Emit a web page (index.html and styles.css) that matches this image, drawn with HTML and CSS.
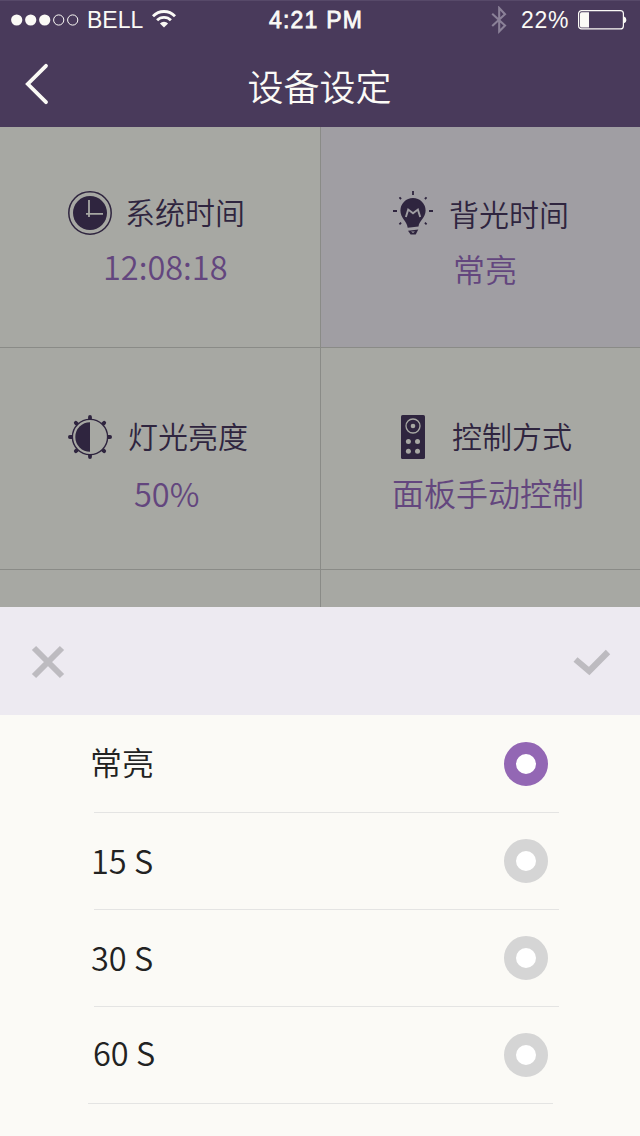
FILE: index.html
```html
<!DOCTYPE html>
<html lang="zh-CN">
<head>
<meta charset="utf-8">
<title>设备设定</title>
<link rel="stylesheet" href="styles.css">
</head>
<body>
<div class="screen">
  <header class="header">
    <div class="status">
      <svg class="signal" width="68" height="12" viewBox="0 0 68 12"><g fill="#fbfaf6"><circle cx="5.7" cy="6" r="5.6"/><circle cx="19.7" cy="6" r="5.6"/><circle cx="33.7" cy="6" r="5.6"/></g><g fill="none" stroke="#fbfaf6"><circle cx="47.7" cy="6" r="5.1"/><circle cx="61.7" cy="6" r="5.1"/></g></svg>
      <span class="carrier">BELL</span>
      <svg class="wifi" width="26" height="20" viewBox="0 0 26 20"><g fill="none" stroke="#fbfaf6" stroke-width="2.8"><path d="M2 7.2a15.2 15.2 0 0 1 22 0"/><path d="M6.1 11.3a9.6 9.6 0 0 1 13.8 0"/></g><path d="M13 18.6L8.9 14.5a5.8 5.8 0 0 1 8.2 0z" fill="#fbfaf6"/></svg>
      <span class="clock">4:21 PM</span>
      <svg class="bluetooth" width="16" height="28" viewBox="0 0 16 28"><path d="M1.2 7.8L14 19.6 8.2 25.4V2L14 8.2 1.2 20" fill="none" stroke="#8b8198" stroke-width="2.1"/></svg>
      <span class="percent">22%</span>
      <svg class="battery" width="50" height="20" viewBox="0 0 50 20"><rect x=".6" y=".6" width="44.8" height="18.3" rx="3" fill="none" stroke="#fbfaf6" stroke-width="1.2"/><path d="M3.5 2.2H11v15.3H3.5A1.5 1.5 0 0 1 2 16V3.7a1.5 1.5 0 0 1 1.5-1.5z" fill="#fbfaf6"/><path d="M46 6.5a3.6 3.6 0 0 1 0 6.8z" fill="#fbfaf6"/></svg>
    </div>
    <div class="nav">
      <svg class="back" width="26" height="44" viewBox="0 0 26 44"><path d="M22 3.8L3.8 22 22 40.2" fill="none" stroke="#fbfaf6" stroke-width="3.8" stroke-linecap="round"/></svg>
      <h1 class="title">设备设定</h1>
    </div>
  </header>

  <main class="settings">
    <section class="cell time">
      <div class="head">
        <svg width="44" height="44" viewBox="0 0 44 44"><circle cx="22" cy="22" r="21.2" fill="none" stroke="#2f253f" stroke-width="1.5"/><circle cx="22" cy="22" r="17" fill="#2f253f"/><path d="M21 9v17M18 22.8h17" stroke="#a7a8a3" stroke-width="1.8"/></svg>
        <span class="label">系统时间</span>
      </div>
      <div class="value">12:08:18</div>
    </section>
    <section class="cell backlight active">
      <div class="head">
        <svg width="40" height="44" viewBox="0 0 40 44"><path d="M20 7a12.6 12.6 0 0 0-12.6 12.6c0 7.4 6.5 10.6 7.3 17.2l10.8-1.4c.8-5.8 7.1-8.6 7.1-15.8A12.6 12.6 0 0 0 20 7z" fill="#2f253f"/><path d="M12.9 26l2.3-7.4 4.8 3.6 4.9-3.6 2.3 7.4" fill="none" stroke="#a09ea3" stroke-width="1.9"/><path d="M15 39.8l10.3-1.3-2.6 5h-5.1z" fill="#2f253f"/><path d="M18 40.4l4 .2-2 1.5z" fill="#a09ea3"/><path d="M20 0v4M0 20h4M36 20h4M6.4 6.3l1.7 1.7M33.6 6.3l-1.7 1.7M6.4 33.3l1.7-1.7M33.6 33.3l-1.7-1.7" stroke="#2f253f" stroke-width="1.8"/></svg>
        <span class="label">背光时间</span>
      </div>
      <div class="value">常亮</div>
    </section>
    <section class="cell brightness">
      <div class="head">
        <svg width="44" height="44" viewBox="0 0 44 44"><g stroke="#2f253f" stroke-width="3.8" stroke-linecap="round"><path d="M22 1.9V4M22 40v2.1M1.9 22H4M40 22h2.1M7.8 7.8l1.4 1.4M36.2 7.8l-1.4 1.4M7.8 36.2l1.4-1.4M36.2 36.2l-1.4-1.4"/></g><circle cx="22" cy="22" r="17.6" fill="#a7a8a3" stroke="#2f253f" stroke-width="1.4"/><path d="M22 7.3a14.7 14.7 0 0 0 0 29.4z" fill="#2f253f"/></svg>
        <span class="label">灯光亮度</span>
      </div>
      <div class="value">50%</div>
    </section>
    <section class="cell control">
      <div class="head">
        <svg width="24" height="44" viewBox="0 0 24 44"><rect width="24" height="44" rx="1.6" fill="#2f253f"/><circle cx="12" cy="11" r="7" fill="none" stroke="#a7a8a3" stroke-width="1.3"/><g fill="#a7a8a3"><circle cx="12" cy="11" r="2.3"/><circle cx="7.4" cy="26.4" r="2.5"/><circle cx="16.5" cy="26.4" r="2.5"/><circle cx="7.4" cy="36.2" r="2.5"/><circle cx="16.5" cy="36.2" r="2.5"/></g></svg>
        <span class="label">控制方式</span>
      </div>
      <div class="value">面板手动控制</div>
    </section>
    <section class="cell"></section>
    <section class="cell"></section>
  </main>

  <div class="sheet">
    <div class="toolbar">
      <svg width="34" height="34" viewBox="0 0 34 34"><path d="M3 3l28 28M31 3L3 31" stroke="#bdbbc0" stroke-width="6"/></svg>
      <svg class="confirm" width="38" height="28" viewBox="0 0 38 28"><path d="M2.5 10.5L16.2 22 35 3" fill="none" stroke="#bdbbc0" stroke-width="6.2"/></svg>
    </div>
    <ul class="options">
      <li class="option"><span class="name">常亮</span><i class="radio checked"></i></li>
      <li class="option"><span class="name number">15 S</span><i class="radio"></i></li>
      <li class="option"><span class="name number">30 S</span><i class="radio"></i></li>
      <li class="option last"><span class="name number">60 S</span><i class="radio"></i></li>
    </ul>
  </div>
</div>
</body>
</html>
```
FILE: styles.css
```css
* { box-sizing: border-box; }
body { margin: 0; }
svg { display: block; flex: none; }

.screen {
  display: flex;
  flex-direction: column;
  width: 640px;
  height: 1136px;
  overflow: hidden;
  background: #fbfaf6;
  font-family: "Noto Sans CJK SC", sans-serif;
  font-weight: 350;
  white-space: nowrap;
}

/* Header */
.header {
  height: 127px;
  background: #493a5b;
  border-top: 1px solid #574969;
  color: #fbfaf6;
}
.status {
  display: flex;
  align-items: center;
  height: 38px;
  padding-left: 11px;
  font: 400 23px/38px "Liberation Sans", Arial, sans-serif;
}
.carrier { width: 64px; margin-left: 8px; }
.wifi { margin-top: -3px; }
.clock { width: 222px; margin-left: 92px; letter-spacing: 1.2px; -webkit-text-stroke: .8px #fbfaf6; }
.percent { width: 57px; margin-left: 14px; letter-spacing: .7px; }
.nav {
  display: grid;
  grid-template-columns: 120px 1fr 120px;
  align-items: center;
  height: 88px;
}
.back { margin: 1px 0 0 24px; }
.title {
  margin: 3px 0 0 -1px;
  font-size: 36px;
  font-weight: 350;
  line-height: 52px;
  text-align: center;
}

/* Settings grid */
.settings {
  display: grid;
  grid-template-columns: 321px 319px;
  grid-template-rows: 221px 222px 37px;
  height: 480px;
  overflow: hidden;
}
.cell {
  background: #a7a8a3;
  border: 0 solid #8a8b87;
  border-bottom-width: 1px;
  padding-top: 64px;
}
.cell:nth-child(odd) { border-right-width: 1px; }
.cell:nth-child(n+5) { border-bottom-width: 0; }
.cell.active { background: #a09ea3; }
.head { display: flex; height: 44px; color: #2f253f; font-size: 30px; line-height: 41px; }
.value { color: #63467e; font-size: 32px; line-height: 48px; }

.time .head { padding-left: 68px; }
.time .label { margin-left: 13px; }
.time .value { padding: 7px 0 0 103px; font-size: 32.5px; }

.backlight .head { padding-left: 72px; line-height: 45px; }
.backlight .label { margin-left: 16px; }
.backlight .value { padding: 9px 0 0 132px; }

.brightness, .control { padding-top: 67px; }
.brightness .head { padding-left: 68px; }
.brightness .label { margin-left: 16px; }
.brightness .value { padding: 10px 0 0 134px; font-size: 32.5px; }

.control .head { padding-left: 80px; }
.control .label { margin-left: 27px; }
.control .value { padding: 9px 0 0 71px; }

/* Picker sheet */
.toolbar {
  display: flex;
  justify-content: space-between;
  align-items: center;
  height: 108px;
  padding: 2px 29px 0 31px;
  background: #edeaf1;
}
.confirm { margin-top: 2px; }
.options {
  margin: 0;
  padding: 0 81px 0 94px;
  list-style: none;
}
.option {
  display: flex;
  justify-content: space-between;
  align-items: center;
  height: 97px;
  padding-right: 11px;
  border-bottom: 1px solid #e4e4e3;
}
.option:first-child { height: 98px; }
.option.last { margin: 0 6px 0 -6px; padding: 0 5px 0 6px; }
.name {
  margin: -5px 0 0 -4px;
  color: #222;
  font-size: 32px;
  line-height: 48px;
}
.name.number { margin: -3px 0 0 -3px; font-size: 32.5px; }
.last .name.number { margin: -7px 0 0 -1px; }
.radio {
  width: 44px;
  height: 44px;
  border: 12px solid #d5d5d5;
  border-radius: 50%;
  background: #fff;
}
.radio.checked { border-color: #9367b4; }
```
